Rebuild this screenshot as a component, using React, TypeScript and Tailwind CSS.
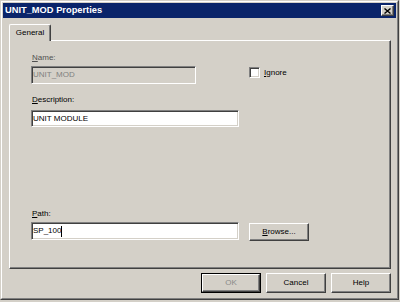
import React from "react";

const sunken =
  "border border-t-[#808080] border-l-[#808080] border-r-white border-b-white shadow-[inset_1px_1px_0_#404040,inset_-1px_-1px_0_#d4d0c8]";
const raised =
  "border border-t-white border-l-white border-r-[#404040] border-b-[#404040] shadow-[inset_-1px_-1px_0_#808080]";

function U({ children }: { children: React.ReactNode }) {
  return <span className="underline underline-offset-[1px]">{children}</span>;
}

export default function App() {
  return (
    <div className="w-[400px] h-[302px] bg-[#d4d0c8] font-['Liberation_Sans',Arial,sans-serif] text-[8px] leading-[10px] text-black">
      <div className="w-[399px] h-[300px] border border-t-[#d4d0c8] border-l-[#d4d0c8] border-r-[#404040] border-b-[#404040]">
        <div className="h-full border border-t-white border-l-white border-r-[#808080] border-b-[#808080] p-px flex flex-col">
          {/* Title bar */}
          <div className="h-[15px] shrink-0 bg-[#0a246a] flex items-center justify-between pl-[2px] pr-[2px]">
            <span className="text-white font-bold text-[9.3px] leading-[15px]">UNIT_MOD Properties</span>
            <div className={`w-[13px] h-[11px] bg-[#d4d0c8] ${raised} flex items-center justify-center`}>
              <svg width="7" height="6" viewBox="0 0 7 6">
                <path d="M0.5 0.5 L6.5 5.5 M6.5 0.5 L0.5 5.5" stroke="#000" strokeWidth="1.4" />
              </svg>
            </div>
          </div>

          {/* Tab strip */}
          <div className="pl-[6px] pt-[6px] shrink-0">
            <div className="relative z-10 -mb-px w-[42px] h-[17px] bg-[#d4d0c8] border-t border-l border-r border-t-white border-l-white border-r-[#404040] shadow-[inset_-1px_0_0_#808080] rounded-t-[2px] flex items-center justify-center">
              <span>General</span>
            </div>
          </div>

          {/* Panel */}
          <div className="ml-[6px] w-[382px] h-[229px] shrink-0 border border-t-white border-l-white border-r-[#404040] border-b-[#404040] shadow-[inset_-1px_-1px_0_#808080] pl-[21px] pt-[12px] flex flex-col">
            <div className="pl-px h-[10px] text-[#505050]">
              <U>N</U>ame:
            </div>
            <div className="mt-[3px] flex items-start">
              <div className={`w-[165px] h-[18px] bg-[#d4d0c8] ${sunken} pl-px flex items-center text-[#808080]`}>
                UNIT_MOD
              </div>
              <div className="ml-[53px] mt-px flex items-center">
                <div className={`w-[11px] h-[11px] bg-white ${sunken}`} />
                <span className="ml-[4px]">
                  <U>I</U>gnore
                </span>
              </div>
            </div>

            <div className="mt-[11px] pl-px h-[10px]">
              <U>D</U>escription:
            </div>
            <div className={`mt-[5px] w-[208px] h-[17px] bg-white ${sunken} pl-px flex items-center`}>
              UNIT MODULE
            </div>

            <div className="mt-[82px] pl-px h-[10px]">
              <U>P</U>ath:
            </div>
            <div className="mt-[3px] flex items-start">
              <div className={`w-[208px] h-[18px] bg-white ${sunken} pl-px flex items-center`}>
                <span>SP_100</span>
                <span className="w-px h-[11px] bg-black" />
              </div>
              <div className={`ml-[10px] mt-px w-[60px] h-[18px] ${raised} flex items-center justify-center`}>
                <span>
                  <U>B</U>rowse...
                </span>
              </div>
            </div>
          </div>

          {/* Buttons */}
          <div className="mt-[4px] flex justify-end gap-[5px] pr-[5px]">
            <div className="w-[60px] h-[20px] border border-black">
              <div className={`h-full ${raised} flex items-center justify-center text-[#8a8a8a]`}>OK</div>
            </div>
            <div className={`w-[60px] h-[20px] ${raised} flex items-center justify-center`}>Cancel</div>
            <div className={`w-[60px] h-[20px] ${raised} flex items-center justify-center`}>Help</div>
          </div>
        </div>
      </div>
    </div>
  );
}
